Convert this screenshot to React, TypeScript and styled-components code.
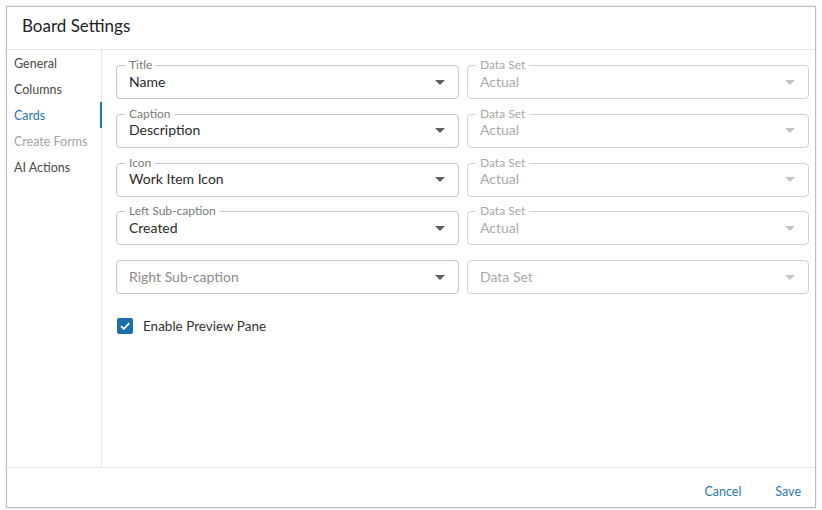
import React from "react";
import styled, { createGlobalStyle } from "styled-components";

const GlobalStyle = createGlobalStyle`
  html, body {
    margin: 0;
    padding: 0;
    background: #ffffff;
  }
  body {
    font-family: Lato, "Open Sans", "Liberation Sans", sans-serif;
    color: #212121;
  }
`;

const Page = styled.div`
  padding: 6px;
  width: 822px;
  height: 510px;
  box-sizing: border-box;
`;

const Dialog = styled.div`
  width: 810px;
  height: 502px;
  box-sizing: border-box;
  border: 1px solid #bdbdbd;
  box-shadow: 0 0 2px rgba(0, 0, 0, 0.15);
  display: flex;
  flex-direction: column;
  background: #fff;
`;

const Header = styled.div`
  height: 43px;
  box-sizing: border-box;
  border-bottom: 1px solid #e6e6e6;
  display: flex;
  align-items: center;
  padding-left: 15px;
  padding-bottom: 5px;
  font-size: 17px;
  color: #222;
`;

const Body = styled.div`
  flex: 1;
  display: flex;
  min-height: 0;
`;

const Sidebar = styled.nav`
  width: 95px;
  box-sizing: border-box;
  border-right: 1px solid #e6e6e6;
  display: flex;
  flex-direction: column;
`;

const NavItem = styled.div<{ $active?: boolean; $disabled?: boolean }>`
  position: relative;
  height: 26px;
  display: flex;
  align-items: center;
  padding-left: 7px;
  font-size: 12.5px;
  color: ${(p) => (p.$active ? "#1f77b4" : p.$disabled ? "#a3a3a3" : "#4a4a4a")};

  &::after {
    content: "";
    display: ${(p) => (p.$active ? "block" : "none")};
    position: absolute;
    right: -1px;
    top: 0;
    bottom: 0;
    width: 2px;
    background: #1f77b4;
  }
`;

const Content = styled.div`
  flex: 1;
  padding: 15px 6px 0 14px;
  display: flex;
  flex-direction: column;
`;

const Grid = styled.div`
  display: grid;
  grid-template-columns: 343px 342px;
  column-gap: 8px;
  row-gap: 14.75px;
`;

const SelectBox = styled.div<{ $disabled?: boolean }>`
  position: relative;
  height: 34px;
  box-sizing: border-box;
  border: 1px solid ${(p) => (p.$disabled ? "#d2d2d2" : "#c6c6c6")};
  border-radius: 4px;
  display: flex;
  align-items: center;
  padding: 0 12px 2px 12px;
`;

const FloatLabel = styled.span<{ $disabled?: boolean }>`
  position: absolute;
  left: 8px;
  top: -8px;
  padding: 0 4px;
  background: #fff;
  font-size: 12px;
  line-height: 14px;
  color: ${(p) => (p.$disabled ? "#a8a8a8" : "#7a7a7a")};
`;

const Value = styled.span<{ $tone: "normal" | "disabled" | "placeholder" }>`
  flex: 1;
  font-size: 14px;
  color: ${(p) =>
    p.$tone === "normal" ? "#2b2b2b" : p.$tone === "disabled" ? "#aaaaaa" : "#8a8a8a"};
`;

const Arrow = styled.span<{ $disabled?: boolean }>`
  width: 0;
  height: 0;
  margin-top: 2px;
  border-left: 5px solid transparent;
  border-right: 5px solid transparent;
  border-top: 5px solid ${(p) => (p.$disabled ? "#c4c4c4" : "#5f5f5f")};
  margin-right: 1px;
`;

const CheckRow = styled.label`
  display: flex;
  align-items: center;
  gap: 10px;
  margin-top: 24px;
  padding-left: 1px;
  font-size: 13.5px;
  color: #333;
`;

const CheckBox = styled.span`
  width: 16px;
  height: 16px;
  border-radius: 2px;
  background: #1b6fad;
  display: flex;
  align-items: center;
  justify-content: center;
`;

const Footer = styled.div`
  height: 40px;
  box-sizing: border-box;
  border-top: 1px solid #e6e6e6;
  display: flex;
  align-items: center;
  justify-content: flex-end;
  padding-right: 14px;
  padding-top: 8px;
  gap: 34px;
`;

const TextButton = styled.button`
  border: none;
  background: none;
  padding: 0;
  font-family: inherit;
  font-size: 12.5px;
  color: #2a7ab3;
  cursor: pointer;
`;

type Field = {
  label?: string;
  value: string;
  disabled?: boolean;
  placeholder?: boolean;
};

function Select({ label, value, disabled, placeholder }: Field) {
  const tone = placeholder ? (disabled ? "disabled" : "placeholder") : disabled ? "disabled" : "normal";
  return (
    <SelectBox $disabled={disabled}>
      {label && <FloatLabel $disabled={disabled}>{label}</FloatLabel>}
      <Value $tone={tone}>{value}</Value>
      <Arrow $disabled={disabled} />
    </SelectBox>
  );
}

const rows: [Field, Field][] = [
  [{ label: "Title", value: "Name" }, { label: "Data Set", value: "Actual", disabled: true }],
  [{ label: "Caption", value: "Description" }, { label: "Data Set", value: "Actual", disabled: true }],
  [{ label: "Icon", value: "Work Item Icon" }, { label: "Data Set", value: "Actual", disabled: true }],
  [{ label: "Left Sub-caption", value: "Created" }, { label: "Data Set", value: "Actual", disabled: true }],
  [
    { value: "Right Sub-caption", placeholder: true },
    { value: "Data Set", placeholder: true, disabled: true },
  ],
];

export default function App() {
  return (
    <Page>
      <GlobalStyle />
      <Dialog>
        <Header>Board Settings</Header>
        <Body>
          <Sidebar>
            <NavItem>General</NavItem>
            <NavItem>Columns</NavItem>
            <NavItem $active>Cards</NavItem>
            <NavItem $disabled>Create Forms</NavItem>
            <NavItem>AI Actions</NavItem>
          </Sidebar>
          <Content>
            <Grid>
              {rows.map(([left, right], i) => (
                <React.Fragment key={i}>
                  <Select {...left} />
                  <Select {...right} />
                </React.Fragment>
              ))}
            </Grid>
            <CheckRow>
              <CheckBox>
                <svg width="12" height="12" viewBox="0 0 12 12">
                  <path d="M2 6.2 L4.8 9 L10.2 3.2" fill="none" stroke="#fff" strokeWidth="1.8" />
                </svg>
              </CheckBox>
              Enable Preview Pane
            </CheckRow>
          </Content>
        </Body>
        <Footer>
          <TextButton>Cancel</TextButton>
          <TextButton>Save</TextButton>
        </Footer>
      </Dialog>
    </Page>
  );
}
